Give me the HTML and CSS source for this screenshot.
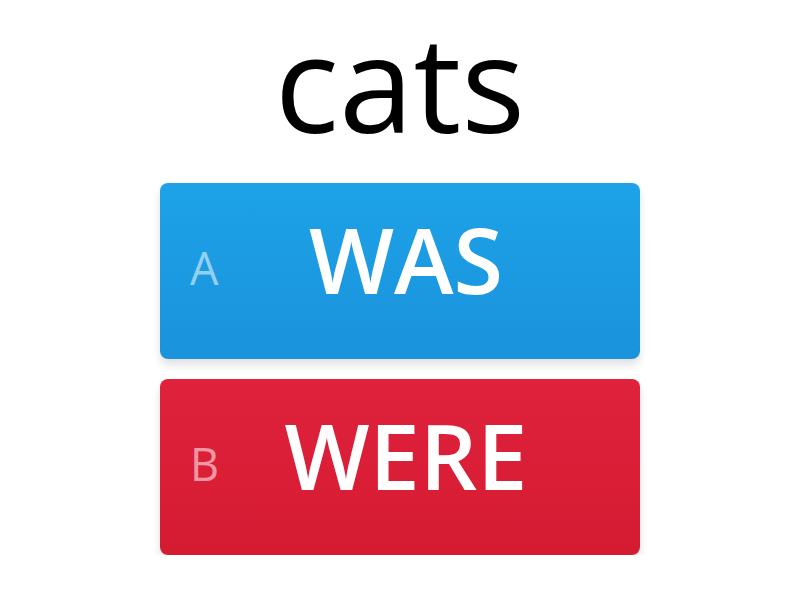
FILE: index.html
```html
<!DOCTYPE html>
<html>
<head>
    <title>Quiz</title>
    <link rel="stylesheet" href="styles.css">
</head>
<body>
    <div class="quiz">
        <div class="question">cats</div>
        <div class="answers">
            <div class="answer blue">
                <span class="key">A</span>
                <span class="word">WAS</span>
            </div>
            <div class="answer red">
                <span class="key">B</span>
                <span class="word">WERE</span>
            </div>
        </div>
    </div>
</body>
</html>
```

FILE: styles.css
```css
body {
    margin: 0;
    padding: 0;
    background: #ffffff;
    font-family: 'Open Sans', 'Noto Sans', sans-serif;
}
.quiz {
    width: 480px;
    margin: 0 auto;
}
.question {
    height: 183px;
    line-height: 162px;
    text-align: center;
    font-size: 134px;
    color: #000;
}
.answers {
    display: flex;
    flex-direction: column;
    gap: 20px;
}
.answer {
    height: 176px;
    border-radius: 8px;
    display: flex;
    align-items: center;
    padding: 0 30px;
    color: #fff;
    box-shadow: 0 6px 8px rgba(0, 0, 0, 0.12);
}
.blue {
    background: linear-gradient(#1da2e8, #1a93db);
}
.red {
    background: linear-gradient(#e0223c, #d41b32);
}
.key {
    width: 60px;
    font-size: 45px;
    color: rgba(255, 255, 255, 0.55);
    margin-top: -8px;
}
.word {
    flex: 1;
    text-align: center;
    font-size: 90px;
    font-weight: 600;
    margin-right: 48px;
    margin-top: -24px;
}
```
